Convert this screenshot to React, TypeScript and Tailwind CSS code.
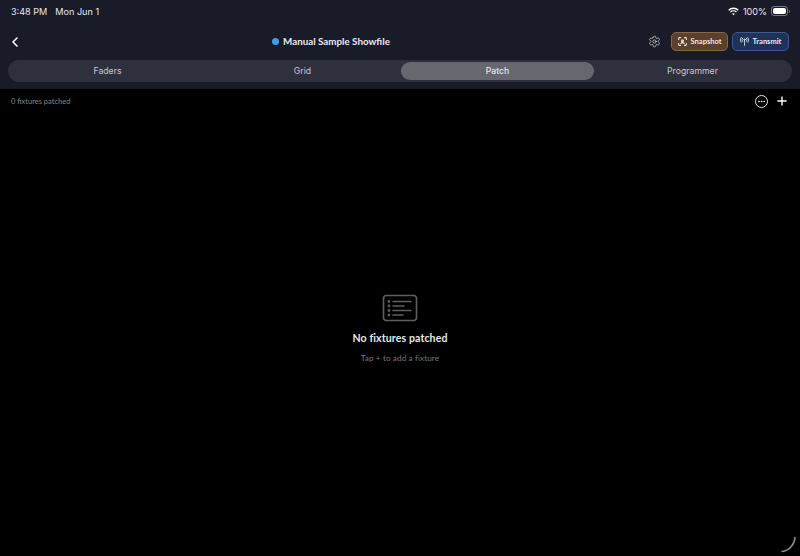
import { ChevronLeft, Ellipsis, Plus, Settings } from "lucide-react";

const tabs = ["Faders", "Grid", "Patch", "Programmer"];

function WifiGlyph() {
  return (
    <svg width="11" height="9" viewBox="0 0 16 12" fill="none" stroke="#fff" strokeWidth="2" strokeLinecap="butt">
      <path d="M1 4.2a10 10 0 0 1 14 0" />
      <path d="M3.6 6.9a6.3 6.3 0 0 1 8.8 0" />
      <path d="M8 11.6 5.9 9.4a3 3 0 0 1 4.2 0Z" fill="#fff" stroke="none" />
    </svg>
  );
}

function BatteryGlyph() {
  return (
    <div className="flex items-center gap-px">
      <div className="h-[10px] w-[17px] rounded-[3px] border border-white/40 p-px">
        <div className="h-full w-full rounded-[2px] bg-white" />
      </div>
      <div className="h-[3px] w-px rounded-r bg-white/40" />
    </div>
  );
}

function SnapshotGlyph() {
  return (
    <svg width="9" height="9" viewBox="0 0 14 14" fill="none" stroke="#efe7df" strokeWidth="1.7" strokeLinecap="round">
      <path d="M1 4V2.2A1.2 1.2 0 0 1 2.2 1H4" />
      <path d="M10 1h1.8A1.2 1.2 0 0 1 13 2.2V4" />
      <path d="M13 10v1.8a1.2 1.2 0 0 1-1.2 1.2H10" />
      <path d="M4 13H2.2A1.2 1.2 0 0 1 1 11.8V10" />
      <circle cx="7" cy="6" r="1.5" />
      <path d="M4.4 10.2a3 3 0 0 1 5.2 0" />
    </svg>
  );
}

function AntennaGlyph() {
  return (
    <svg width="9" height="9" viewBox="0 0 14 14" fill="none" stroke="#dbe4f3" strokeWidth="1.3" strokeLinecap="round">
      <path d="M7 5v8" />
      <circle cx="7" cy="4" r="1.1" />
      <path d="M4 1.6a4 4 0 0 0 0 5.4" />
      <path d="M10 1.6a4 4 0 0 1 0 5.4" />
      <path d="M1.6 0.8a7 7 0 0 0 0 7.4" />
      <path d="M12.4 0.8a7 7 0 0 1 0 7.4" />
    </svg>
  );
}

function EmptyListGlyph() {
  return (
    <svg width="36" height="28" viewBox="0 0 36 28" fill="none" stroke="#5f5f61" strokeWidth="1.6" strokeLinecap="round">
      <rect x="1.5" y="1.5" width="33" height="25" rx="3" />
      <circle cx="7" cy="7.5" r="0.6" fill="#5f5f61" />
      <circle cx="7" cy="12" r="0.6" fill="#5f5f61" />
      <circle cx="7" cy="16.5" r="0.6" fill="#5f5f61" />
      <circle cx="7" cy="21" r="0.6" fill="#5f5f61" />
      <path d="M11 7.5h18" />
      <path d="M11 12h11" />
      <path d="M11 16.5h18" />
      <path d="M11 21h10" />
    </svg>
  );
}

export default function App() {
  return (
    <div className="relative flex h-[556px] w-[800px] flex-col overflow-hidden bg-black font-['Lato',sans-serif] text-white">
      <header className="h-[89px] shrink-0 bg-[#1a1b28]">
        <div className="flex h-[23px] items-center justify-between pl-[11px] pr-[10px] font-['Inter',sans-serif] text-[9.1px] text-[#e8e8ec]">
          <div className="flex gap-[8px]">
            <span>3:48 PM</span>
            <span>Mon Jun 1</span>
          </div>
          <div className="flex items-center gap-1">
            <WifiGlyph />
            <span>100%</span>
            <BatteryGlyph />
          </div>
        </div>

        <div className="flex h-[37px] items-center pl-[7px] pr-[11px]">
          <ChevronLeft size={16} strokeWidth={2.4} className="text-white" />
          <div className="flex flex-1 items-center justify-center gap-[4px] pr-[8px]">
            <span className="h-[7px] w-[7px] rounded-full bg-[#3f9fe8]" />
            <span className="text-[9.8px] font-bold text-[#e9e9ee]">Manual Sample Showfile</span>
          </div>
          <Settings size={13} strokeWidth={1.5} className="ml-[1px] text-[#c9c9cf]" />
          <button className="ml-[10px] flex h-[19px] w-[57px] items-center justify-center gap-[4px] rounded-[5px] border border-[#8d6540] bg-[#5a402e] text-[7.5px] font-bold text-[#efe7df]">
            <SnapshotGlyph />
            Snapshot
          </button>
          <button className="ml-[4px] flex h-[19px] w-[57px] items-center justify-center gap-[4px] rounded-[5px] border border-[#365a91] bg-[#1f3357] text-[7.5px] font-bold text-[#e3e9f4]">
            <AntennaGlyph />
            Transmit
          </button>
        </div>

        <nav className="mx-2 grid h-[22px] grid-cols-4 rounded-full bg-[#2f303d] p-[2px] font-['Inter',sans-serif] text-[8.7px]">
          {tabs.map((tab) => (
            <div
              key={tab}
              className={
                tab === "Patch"
                  ? "mx-px flex items-center justify-center rounded-full bg-[#67676f] pt-px font-medium text-[#e8e8ec]"
                  : "flex items-center justify-center pt-px text-[#c8c8cf]"
              }
            >
              {tab}
            </div>
          ))}
        </nav>
      </header>

      <div className="flex h-[24px] shrink-0 items-center justify-between px-[11px]">
        <span className="pt-px text-[7.5px] text-[#85858a]">0 fixtures patched</span>
        <div className="flex items-center gap-[7px]">
          <div className="flex h-[13px] w-[13px] items-center justify-center rounded-full border border-[#e6e6e6]">
            <Ellipsis size={9} strokeWidth={2.4} />
          </div>
          <Plus size={14} strokeWidth={2.4} />
        </div>
      </div>

      <main className="flex flex-1 flex-col items-center pt-[181px]">
        <EmptyListGlyph />
        <h2 className="mt-[9px] text-[10.6px] font-bold tracking-[0.1px] text-[#e6e6e6]">No fixtures patched</h2>
        <p className="mt-[5px] text-[8.2px] tracking-[0.1px] text-[#78787b]">Tap + to add a fixture</p>
      </main>

      <svg className="absolute bottom-[2px] right-[3px]" width="18" height="18" viewBox="0 0 18 18" fill="none" strokeLinecap="round">
        <path d="M16 1.5C15.5 8.5 10.5 14.5 3 15.5" stroke="#8b8b8b" strokeWidth="1.6" />
      </svg>
    </div>
  );
}
